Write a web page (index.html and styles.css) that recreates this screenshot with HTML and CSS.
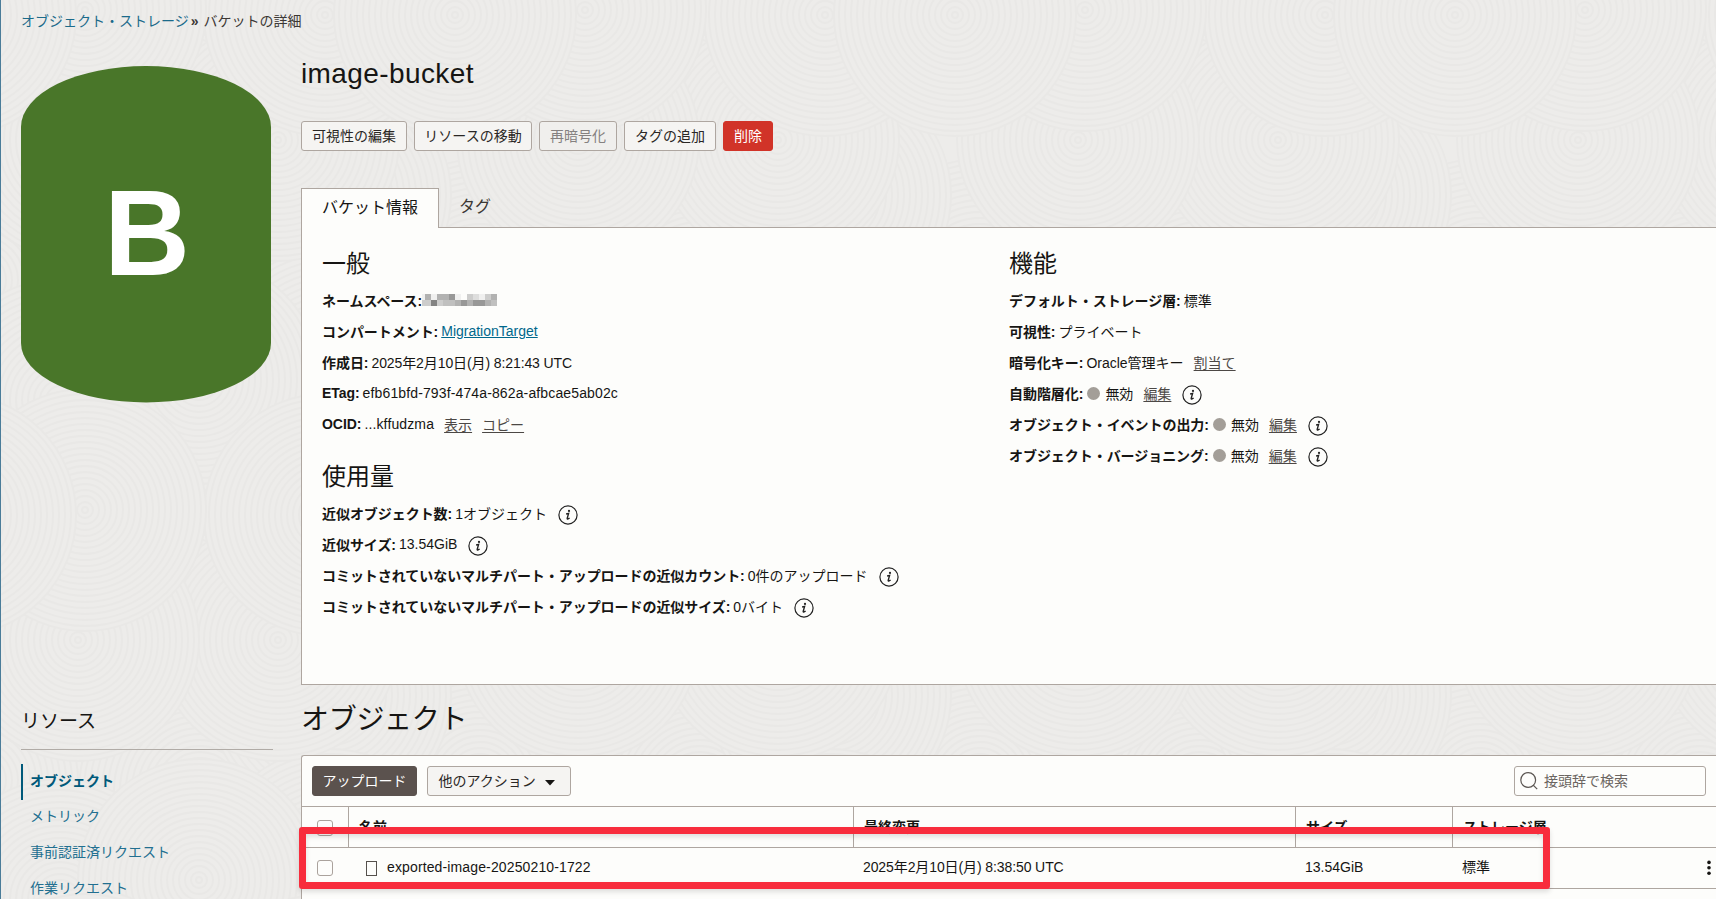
FILE: index.html
```html
<!DOCTYPE html>
<html lang="ja">
<head>
    <meta charset="UTF-8">
    <title>バケットの詳細</title>
    <link rel="stylesheet" href="styles.css">
</head>
<body>
    <svg class="texture" width="1716" height="899">
        <defs>
            <g id="swirl">
                <circle r="121" class="disk"/>
                <circle r="116"/><circle r="110"/><circle r="104"/><circle r="98"/><circle r="92"/>
                <circle r="86"/><circle r="80"/><circle r="74"/><circle r="68"/><circle r="62"/>
                <circle r="56"/><circle r="50"/><circle r="44"/><circle r="38"/><circle r="32"/>
                <circle r="26"/><circle r="20"/><circle r="14"/><circle r="8"/><circle r="3"/>
            </g>
            <pattern id="rings" width="500" height="500" patternUnits="userSpaceOnUse">
                <use href="#swirl" x="200" y="60"/>
                <use href="#swirl" x="-20" y="280"/>
                <use href="#swirl" x="480" y="280"/>
                <use href="#swirl" x="200" y="290"/>
                <use href="#swirl" x="330" y="195"/>
                <use href="#swirl" x="330" y="370"/>
                <use href="#swirl" x="278" y="140"/>
                <use href="#swirl" x="60" y="400"/>
                <use href="#swirl" x="560" y="400"/>
                <use href="#swirl" x="199" y="380"/>
                <use href="#swirl" x="325" y="15"/>
                <use href="#swirl" x="325" y="515"/>
                <use href="#swirl" x="78" y="140"/>
                <use href="#swirl" x="578" y="140"/>
                <use href="#swirl" x="85" y="10"/>
                <use href="#swirl" x="85" y="510"/>
                <use href="#swirl" x="455" y="15"/>
                <use href="#swirl" x="-45" y="15"/>
                <use href="#swirl" x="455" y="515"/>
                <use href="#swirl" x="-45" y="515"/>
            </pattern>
            <symbol id="info" viewBox="0 0 20 20">
                <circle cx="10" cy="10" r="9.1" fill="none" stroke="#222" stroke-width="1.2"/>
                <circle cx="11" cy="5.9" r="1.1" fill="#222"/>
                <path d="M8.1 9 L10.6 8.5 L9.2 13.4 Q9.2 14.8 11.6 13" fill="none" stroke="#222" stroke-width="1.4"/>
            </symbol>
        </defs>
        <rect width="1716" height="899" fill="url(#rings)"/>
    </svg>

    <div class="page">
        <div class="breadcrumb"><a>オブジェクト・ストレージ</a><b>»</b><span>バケットの詳細</span></div>

        <div class="layout">
            <div class="bucket">
                <svg width="250" height="337" viewBox="0 0 250 337">
                    <path d="M0 61 A125 61 0 0 1 250 61 V277 A125 59.5 0 0 1 0 277 Z" fill="#497629"/>
                    <text x="83" y="209" class="bucket-letter" textLength="86" lengthAdjust="spacingAndGlyphs">B</text>
                </svg>
            </div>

            <div class="detail">
                <h1>image-bucket</h1>
                <div class="actions">
                    <button class="btn w106">可視性の編集</button>
                    <button class="btn w118">リソースの移動</button>
                    <button class="btn w78 disabled">再暗号化</button>
                    <button class="btn w92">タグの追加</button>
                    <button class="btn w50 danger">削除</button>
                </div>
                <div class="tabs">
                    <div class="tab active">バケット情報</div>
                    <div class="tab">タグ</div>
                </div>
                <div class="panel">
                    <div class="col">
                        <h2>一般</h2>
                        <p><b>ネームスペース:</b><svg class="mosaic" width="75" height="12" shape-rendering="crispEdges">
                            <path fill="#f0f0ef" d="M0 0h3v6h-3zM15 0h-6v6h6zM33 0h6v6h-6zM57 0h6v6h-6z"/>
                            <path fill="#b2b2b1" d="M3 0h6v6h-6zM15 0h12v6h-12zM69 0h6v6h-6zM33 6h6v6h-6zM45 6h6v6h-6zM63 6h6v6h-6z"/>
                            <path fill="#989897" d="M27 0h6v6h-6zM39 6h6v6h-6zM51 6h12v6h-12z"/>
                            <path fill="#cdcdcc" d="M45 0h6v6h-6zM63 0h6v6h-6zM0 6h9v6h-9zM15 6h6v6h-6z"/>
                            <path fill="#838382" d="M9 6h6v6h-6z"/>
                            <path fill="#c0c0bf" d="M21 6h12v6h-12zM69 6h6v6h-6z"/>
                            <path fill="#dededd" d="M51 0h6v6h-6z"/>
                        </svg></p>
                        <p><b>コンパートメント:</b> <a class="link">MigrationTarget</a></p>
                        <p><b>作成日:</b> <span class="date">2025年2月10日(月) 8:21:43 UTC</span></p>
                        <p><b>ETag:</b> <span class="etag">efb61bfd-793f-474a-862a-afbcae5ab02c</span></p>
                        <p><b>OCID:</b> <span class="etag">...kffudzma</span> <a class="act">表示</a> <a class="act">コピー</a></p>
                        <h2 class="usage">使用量</h2>
                        <p><b>近似オブジェクト数:</b> 1オブジェクト <svg class="info"><use href="#info"/></svg></p>
                        <p><b>近似サイズ:</b> 13.54GiB <svg class="info"><use href="#info"/></svg></p>
                        <p><b>コミットされていないマルチパート・アップロードの近似カウント:</b> 0件のアップロード <svg class="info"><use href="#info"/></svg></p>
                        <p><b>コミットされていないマルチパート・アップロードの近似サイズ:</b> 0バイト <svg class="info"><use href="#info"/></svg></p>
                    </div>
                    <div class="col">
                        <h2>機能</h2>
                        <p><b>デフォルト・ストレージ層:</b> 標準</p>
                        <p><b>可視性:</b> プライベート</p>
                        <p><b>暗号化キー:</b> Oracle管理キー <a class="act">割当て</a></p>
                        <p><b>自動階層化:</b> <i class="dot"></i>無効 <a class="act">編集</a> <svg class="info"><use href="#info"/></svg></p>
                        <p><b>オブジェクト・イベントの出力:</b> <i class="dot"></i>無効 <a class="act">編集</a> <svg class="info"><use href="#info"/></svg></p>
                        <p><b>オブジェクト・バージョニング:</b> <i class="dot"></i>無効 <a class="act">編集</a> <svg class="info"><use href="#info"/></svg></p>
                    </div>
                </div>
            </div>

            <div class="resources">
                <h3>リソース</h3>
                <ul>
                    <li class="current">オブジェクト</li>
                    <li>メトリック</li>
                    <li>事前認証済リクエスト</li>
                    <li>作業リクエスト</li>
                </ul>
            </div>

            <div class="objects">
                <h1>オブジェクト</h1>
                <div class="card">
                    <div class="toolbar">
                        <button class="btn w105 dark">アップロード</button>
                        <button class="btn w144 menu">他のアクション
                            <svg width="10" height="6"><path d="M0 0h10L5 5.5z" fill="#161513"/></svg>
                        </button>
                        <div class="search">
                            <svg width="18" height="18" viewBox="0 0 18 18" fill="none" stroke="#5b5652" stroke-width="1.2">
                                <circle cx="8.2" cy="8" r="7.4"/>
                                <path d="M13.2 13.2l4 4"/>
                            </svg>
                            <span>接頭辞で検索</span>
                        </div>
                    </div>
                    <table>
                        <colgroup><col class="c1"><col class="c2"><col class="c3"><col class="c4"><col></colgroup>
                        <tr>
                            <th><i class="check"></i></th>
                            <th>名前</th>
                            <th>最終変更</th>
                            <th>サイズ</th>
                            <th>ストレージ層</th>
                        </tr>
                        <tr>
                            <td><i class="check"></i></td>
                            <td class="file"><i class="doc"></i><span class="etag">exported-image-20250210-1722</span></td>
                            <td class="date">2025年2月10日(月) 8:38:50 UTC</td>
                            <td>13.54GiB</td>
                            <td><div class="last">標準<svg width="4" height="16" fill="#161513"><circle cx="2" cy="3.4" r="1.8"/><circle cx="2" cy="8.8" r="1.8"/><circle cx="2" cy="14.2" r="1.8"/></svg></div></td>
                        </tr>
                    </table>
                    <div class="highlight"></div>
                </div>
            </div>
        </div>
    </div>
</body>
</html>
```

FILE: styles.css
```css
* {
    box-sizing: border-box;
}
body {
    margin: 0;
    height: 899px;
    overflow: hidden;
    background: #edecea;
    font-family: "Liberation Sans", "Noto Sans CJK JP", sans-serif;
    font-size: 14px;
    color: #161513;
}
.texture {
    position: absolute;
    top: 0;
    left: 0;
    z-index: -1;
}
#swirl circle {
    fill: none;
    stroke: #e9e8e6;
    stroke-width: 1.8;
}
#swirl .disk {
    fill: #edecea;
}
.page {
    height: 899px;
    padding-left: 20px;
    border-left: 1px solid #4a7c99;
    overflow: hidden;
}
.breadcrumb {
    height: 43px;
    line-height: 43px;
    color: #3c3835;
}
.breadcrumb a {
    color: #1b6a8a;
}
.breadcrumb b {
    margin: 0 5px 0 2px;
}
.layout {
    display: grid;
    grid-template-columns: 252px 1fr;
    grid-template-rows: 642px 1fr;
    column-gap: 28px;
}
h1, h2, h3 {
    margin: 0;
    font-weight: normal;
}
.bucket {
    padding-top: 23px;
}
.bucket-letter {
    font: bold 122px "Liberation Sans", sans-serif;
    fill: #fff;
}
h1 {
    font-size: 28px;
    line-height: 40px;
}
.detail h1 {
    margin-top: 11px;
    letter-spacing: 0.4px;
}
.actions {
    display: flex;
    gap: 7px;
    margin-top: 27px;
}
.btn {
    height: 30px;
    padding: 0;
    border: 1px solid #aea6a0;
    border-radius: 3px;
    background: #f5f4f2;
    color: #2a2725;
    font: inherit;
    line-height: 26px;
    white-space: nowrap;
}
.w50 { width: 50px; }
.w78 { width: 78px; }
.w92 { width: 92px; }
.w105 { width: 105px; }
.w106 { width: 106px; }
.w118 { width: 118px; }
.w144 { width: 144px; }
.disabled {
    background: #f0efed;
    color: #858180;
}
.danger {
    background: #d13328;
    border-color: #d13328;
    color: #fff;
}
.dark {
    background: #5b524e;
    border-color: #5b524e;
    color: #fff;
}
.tabs {
    display: flex;
    height: 39px;
    margin-top: 37px;
    font-size: 16px;
}
.tab {
    padding: 0 20px;
    line-height: 37px;
    color: #3c3835;
}
.tab.active {
    height: 40px;
    border: 1px solid #aea6a0;
    border-bottom: none;
    background: #fdfdfb;
    line-height: 38px;
    color: #161513;
    z-index: 1;
}
.panel {
    display: flex;
    height: 458px;
    padding: 16px 20px 0;
    border: 1px solid #aea6a0;
    border-right: none;
    background: #fdfdfb;
}
.col {
    width: 687px;
    flex: none;
    white-space: nowrap;
}
h2 {
    height: 40px;
    font-size: 24px;
    line-height: 40px;
}
h2.usage {
    margin-top: 18px;
}
.col p {
    display: flex;
    align-items: center;
    height: 31px;
    margin: 0;
}
.col p b {
    margin-right: 3px;
    letter-spacing: -0.05px;
}
.col .mosaic {
    margin: 1px 0 0 -3px;
}
.date {
    letter-spacing: -0.1px;
}
.etag {
    letter-spacing: 0.13px;
}
.link {
    color: #00688c;
    text-decoration: underline;
}
.act {
    margin-left: 10px;
    color: #4c4845;
    text-decoration: underline;
    text-underline-offset: 2px;
}
.info {
    width: 20px;
    height: 20px;
    margin: 4px 0 0 11px;
}
.dot {
    width: 13px;
    height: 13px;
    margin: 2px 5px 0 1px;
    border-radius: 50%;
    background: #a39e98;
}
.resources h3 {
    height: 65px;
    padding-top: 22px;
    border-bottom: 1px solid #b0aba6;
    font-size: 19px;
    line-height: 30px;
}
.resources ul {
    margin: 14px 0 0;
    padding: 0;
    list-style: none;
}
.resources li {
    height: 36px;
    padding-left: 9px;
    line-height: 32px;
    color: #226f90;
}
.resources .current {
    padding-left: 7px;
    border-left: 2px solid #00597a;
    line-height: 34px;
    color: #00597a;
    font-weight: bold;
}
.objects h1 {
    padding-top: 15px;
    letter-spacing: -0.3px;
}
.card {
    position: relative;
    height: 180px;
    margin-top: 15px;
    border: 1px solid #aea6a0;
    border-right: none;
    border-radius: 3px 0 0 0;
    background: #fdfdfb;
}
.toolbar {
    display: flex;
    align-items: center;
    gap: 10px;
    height: 50px;
    padding: 0 10px;
}
.menu {
    padding-right: 5px;
}
.menu svg {
    margin-left: 5px;
    vertical-align: 0;
}
.search {
    display: flex;
    align-items: center;
    gap: 6px;
    width: 192px;
    height: 30px;
    margin-left: auto;
    padding-left: 5px;
    border: 1px solid #aea6a0;
    border-radius: 3px;
    color: #6b6561;
    line-height: 26px;
}
table {
    width: 100%;
    table-layout: fixed;
    border-collapse: separate;
    border-spacing: 0;
    border-top: 1px solid #aea6a0;
}
.c1 { width: 47px; }
.c2 { width: 505px; }
.c3 { width: 442px; }
.c4 { width: 157px; }
th, td {
    height: 41px;
    padding: 0 0 0 10px;
    border-bottom: 1px solid #aea6a0;
    text-align: left;
    line-height: 20px;
    white-space: nowrap;
}
td {
    padding: 0 0 2px 9px;
}
th {
    border-right: 1px solid #aea6a0;
}
th:last-child {
    border-right: none;
}
th:first-child, td:first-child {
    padding-left: 15px;
}
th .check {
    margin-top: 2px;
}
.check {
    display: block;
    width: 16px;
    height: 16px;
    border: 1px solid #aaa29c;
    border-radius: 3px;
}
td .check {
    margin-top: 1px;
}
.doc {
    display: inline-block;
    width: 11px;
    height: 15px;
    margin: 0 10px 0 8px;
    border: 1px solid #55504c;
    vertical-align: -4px;
}
.last {
    display: flex;
    align-items: center;
    justify-content: space-between;
    padding-right: 5px;
}
/* red frame over the first object row */
.highlight {
    position: absolute;
    top: 71px;
    left: -3px;
    width: 1251px;
    height: 62px;
    border: 7px solid #f82c3c;
    border-radius: 3px;
    box-shadow: 0 3px 5px rgba(0, 0, 0, 0.12), inset 0 3px 5px rgba(0, 0, 0, 0.12);
}
```
